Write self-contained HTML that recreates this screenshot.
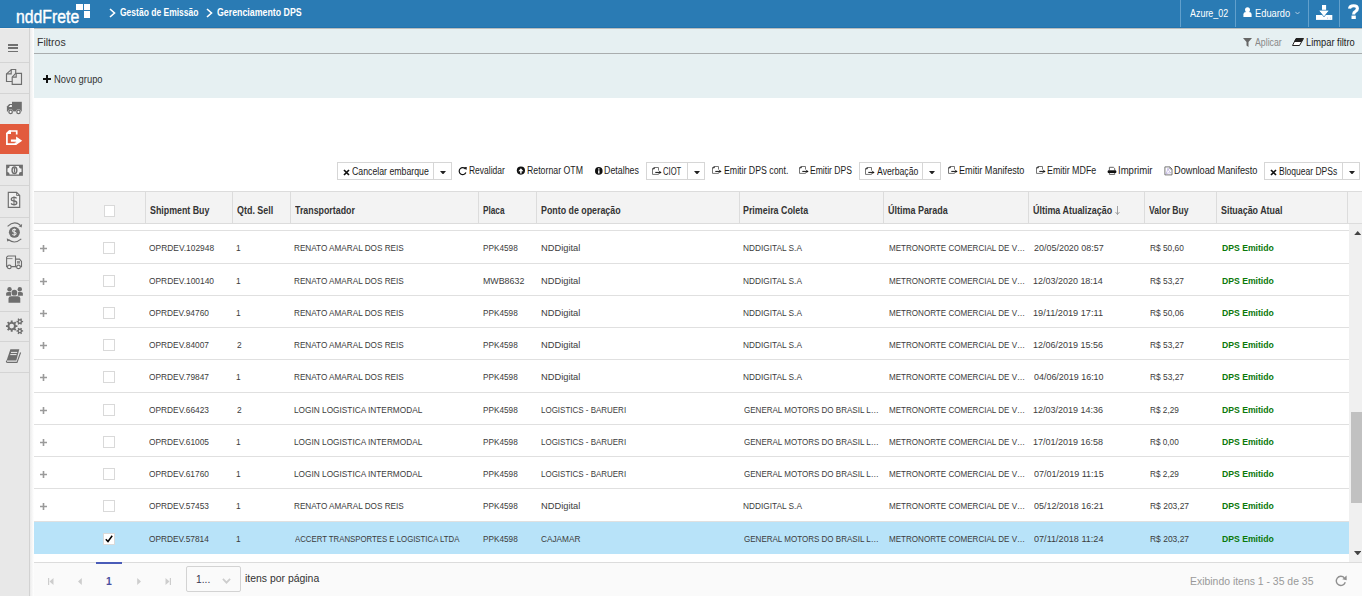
<!DOCTYPE html><html><head><meta charset="utf-8"><style>
*{margin:0;padding:0;box-sizing:border-box}
html,body{width:1362px;height:596px;overflow:hidden;background:#fff;font-family:"Liberation Sans", sans-serif;color:#333}
.a{position:absolute}
.t{position:absolute;white-space:nowrap;line-height:1;transform-origin:0 0}
</style></head><body>
<div class="a" style="left:0;top:0;width:1362px;height:28px;background:#2a7bb4"></div>
<div class="t" style="left:16.24px;top:8.00px;font-size:18px;color:#fff;transform:scaleX(0.8771);-webkit-text-stroke:0.4px #fff;">nddFrete</div>
<div class="a" style="left:76px;top:4px;width:7px;height:6px;background:#fff"></div>
<div class="a" style="left:84px;top:4px;width:6px;height:6px;background:#fff"></div>
<div class="a" style="left:84px;top:11px;width:6px;height:7px;background:#fff"></div>
<svg class="a" style="left:108.5px;top:8px" width="7" height="10" viewBox="0 0 7 10"><path d="M1 1 L5.5 5 L1 9" stroke="#fff" stroke-width="1.6" fill="none"/></svg>
<div class="t" style="left:120.46px;top:8.00px;font-size:10px;font-weight:bold;color:#fff;transform:scaleX(0.8509);">Gestão de Emissão</div>
<svg class="a" style="left:205.5px;top:8px" width="7" height="10" viewBox="0 0 7 10"><path d="M1 1 L5.5 5 L1 9" stroke="#fff" stroke-width="1.6" fill="none"/></svg>
<div class="t" style="left:216.85px;top:8.00px;font-size:10px;font-weight:bold;color:#fff;transform:scaleX(0.8808);">Gerenciamento DPS</div>
<div class="a" style="left:1180px;top:0;width:1px;height:27px;background:#62a0cc"></div>
<div class="a" style="left:1235px;top:0;width:1px;height:27px;background:#62a0cc"></div>
<div class="a" style="left:1308px;top:0;width:1px;height:27px;background:#62a0cc"></div>
<div class="a" style="left:1339px;top:0;width:1px;height:27px;background:#62a0cc"></div>
<div class="t" style="left:1189.70px;top:9.00px;font-size:10px;color:#fff;transform:scaleX(0.8926);">Azure_02</div>
<svg class="a" style="left:1242.5px;top:7px" width="9" height="10" viewBox="0 0 9 10"><circle cx="4.5" cy="2.7" r="2.5" fill="#fff"/><path d="M0.4 10 V7.6 C0.4 5.8 1.6 5 3 5 L6 5 C7.4 5 8.6 5.8 8.6 7.6 V10Z" fill="#fff"/></svg>
<div class="t" style="left:1254.96px;top:9.00px;font-size:10px;color:#fff;transform:scaleX(0.9305);">Eduardo</div>
<svg class="a" style="left:1295px;top:11px" width="5" height="4" viewBox="0 0 5 4"><path d="M0.3 0.8 L2.5 3 L4.7 0.8" stroke="#cfe0ee" stroke-width="0.8" fill="none"/></svg>
<svg class="a" style="left:1310px;top:0px" width="28" height="24" viewBox="0 0 28 24"><rect x="6" y="15" width="16.3" height="4.9" fill="#fff"/><rect x="12" y="5" width="4.1" height="6" fill="#fff"/><path d="M8.7 10.3 H19.2 L14 16.8Z" fill="#fff" stroke="#2a7bb4" stroke-width="0.9"/><path d="M9.6 10.8 H18.3 L14 16Z" fill="#fff"/><rect x="17.1" y="17.6" width="1" height="1" fill="#b9b4e0"/><rect x="19.8" y="17.6" width="1" height="1" fill="#b9d0e8"/></svg>
<svg class="a" style="left:1346px;top:3px" width="16" height="18" viewBox="0 0 16 18"><path d="M3.5 5.6 Q3.8 2.7 7.6 2.7 Q11.4 2.7 11.4 5.6 Q11.4 7.4 9.5 8.4 Q7.6 9.3 7.6 11.4" stroke="#fff" stroke-width="3.1" fill="none"/><rect x="5.5" y="12.6" width="4.3" height="3.4" fill="#fff"/></svg>
<div class="a" style="left:0;top:28px;width:29px;height:568px;background:#e8e8e8"></div>
<div class="a" style="left:29px;top:28px;width:1px;height:568px;background:#d2d2d2"></div>
<div class="a" style="left:0;top:62px;width:29px;height:1px;background:#d4d4d4"></div>
<div class="a" style="left:0;top:93px;width:29px;height:1px;background:#d4d4d4"></div>
<div class="a" style="left:0;top:124px;width:29px;height:30px;background:#e25b3d"></div>
<div class="a" style="left:0;top:185px;width:29px;height:1px;background:#d4d4d4"></div>
<div class="a" style="left:0;top:217px;width:29px;height:1px;background:#d4d4d4"></div>
<div class="a" style="left:0;top:248px;width:29px;height:1px;background:#d4d4d4"></div>
<div class="a" style="left:0;top:280px;width:29px;height:1px;background:#d4d4d4"></div>
<div class="a" style="left:0;top:311px;width:29px;height:1px;background:#d4d4d4"></div>
<div class="a" style="left:0;top:341px;width:29px;height:1px;background:#d4d4d4"></div>
<div class="a" style="left:0;top:372px;width:29px;height:1px;background:#d4d4d4"></div>
<div class="a" style="left:8px;top:44.3px;width:9.6px;height:1.3px;background:#707070"></div>
<div class="a" style="left:8px;top:47.3px;width:9.6px;height:1.3px;background:#707070"></div>
<div class="a" style="left:8px;top:50.6px;width:9.6px;height:1.3px;background:#707070"></div>
<svg class="a" style="left:3px;top:66px" width="22" height="22" viewBox="0 0 22 22"><g stroke="#6e6e6e" stroke-width="1.15" fill="none" stroke-linejoin="miter"><path d="M9.2 15.5 H3.5 V7.9 L8.4 3.5 H12.7 V7.4"/><path d="M3.5 7.9 H8.2 V3.5"/><path d="M9.2 11.1 L12.7 7.4 H18.5 V18.4 H9.2 Z"/><path d="M9.2 11.1 H13.2 V7.4"/></g></svg>
<svg class="a" style="left:3px;top:97px" width="22" height="22" viewBox="0 0 22 22"><rect x="9" y="4.8" width="9.8" height="9.6" fill="#6e6e6e"/><path d="M3.9 14.4 V9.4 L6.3 7 H9.5 V14.4 Z" fill="#6e6e6e"/><path d="M5.6 9.9 L7.4 8.1 H8.9 V9.9 Z" fill="#f4f4f4"/><circle cx="7.6" cy="14.9" r="2.6" fill="#e8e8e8"/><circle cx="15.5" cy="14.9" r="2.6" fill="#e8e8e8"/><circle cx="7.6" cy="14.9" r="1.7" fill="#fafafa" stroke="#6e6e6e" stroke-width="1.3"/><circle cx="15.5" cy="14.9" r="1.7" fill="#fafafa" stroke="#6e6e6e" stroke-width="1.3"/></svg>
<svg class="a" style="left:3px;top:125px" width="22" height="22" viewBox="0 0 22 22"><g stroke="#fff" stroke-width="1.7" fill="none" stroke-linejoin="miter"><path d="M13.7 9.6 V6 H6.3 L3.9 8.4 V19.1 H12.6 V17.6"/></g><path d="M3.1 8.9 L6.3 5.6 H8 V8.9 Z" fill="#fff"/><path d="M7.9 14.6 H13.1 V11.4 L19.2 15.7 L13.1 19.9 V16.7 H7.9Z" fill="#fff"/></svg>
<svg class="a" style="left:3px;top:159px" width="22" height="22" viewBox="0 0 22 22"><rect x="3.1" y="5.7" width="16.8" height="11.1" fill="#6e6e6e"/><path d="M6.6 7.1 H15.9 A2.3 2.3 0 0 0 18.5 9.6 V13 A2.3 2.3 0 0 0 15.9 15.4 H6.6 A2.3 2.3 0 0 0 4.5 13 V9.6 A2.3 2.3 0 0 0 6.6 7.1Z" fill="#f2f2f2"/><ellipse cx="11.45" cy="11.25" rx="2.4" ry="3.2" fill="none" stroke="#6e6e6e" stroke-width="1.4"/><path d="M11.5 9 V13.5" stroke="#6e6e6e" stroke-width="1.3"/></svg>
<svg class="a" style="left:3px;top:189px" width="22" height="22" viewBox="0 0 22 22"><path d="M5.3 3.4 H13.6 L16.7 6.5 V18.4 H5.3 Z" fill="#f0f0f0" stroke="#6e6e6e" stroke-width="1.15"/><path d="M13.6 3.4 V6.5 H16.7" fill="none" stroke="#6e6e6e" stroke-width="0.9"/><path d="M13.6 9.4 Q13 8.4 11 8.4 Q8.3 8.4 8.3 10.3 Q8.3 11.8 11 12 Q13.8 12.2 13.8 13.9 Q13.8 15.6 11 15.6 Q8.7 15.6 8.1 14.4" fill="none" stroke="#6e6e6e" stroke-width="1.3"/><path d="M11 7.4 V16.4" stroke="#6e6e6e" stroke-width="1.1"/></svg>
<svg class="a" style="left:3px;top:221px" width="22" height="22" viewBox="0 0 22 22"><circle cx="11.4" cy="11.3" r="5.5" fill="#6e6e6e"/><path d="M12.9 9.2 Q12.5 8.4 11.3 8.4 Q9.6 8.4 9.6 9.8 Q9.6 10.9 11.3 11.1 Q13.1 11.3 13.1 12.6 Q13.1 14 11.3 14 Q9.9 14 9.5 13.1" fill="none" stroke="#e8e8e8" stroke-width="1.1"/><path d="M11.3 7.6 V14.9" stroke="#e8e8e8" stroke-width="0.9"/><path d="M4.6 5.4 Q11 -0.8 17.2 4.0" fill="none" stroke="#6e6e6e" stroke-width="1.1"/><path d="M19.1 3.0 L18.7 6.4 L15.5 5.3 Z" fill="#6e6e6e"/><path d="M18.3 17.9 Q11.8 23.5 5.6 18.8" fill="none" stroke="#6e6e6e" stroke-width="1.1"/><path d="M3.8 17.2 L4.2 20.6 L7.2 19.2 Z" fill="#6e6e6e"/></svg>
<svg class="a" style="left:3px;top:251px" width="22" height="22" viewBox="0 0 22 22"><g stroke="#6e6e6e" stroke-width="1.1" fill="none"><path d="M3.6 15.6 V6.2 L5 5 H12.5 V15.6 Z"/><path d="M12.5 8.1 H16.5 L18.5 10.4 V15.6 H12.5"/><path d="M4 7.6 H9.5" stroke-width="0.8"/></g><rect x="14" y="10" width="3" height="2.6" fill="#6e6e6e" opacity="0.7"/><circle cx="6.3" cy="15.9" r="1.8" fill="#f4f4f4" stroke="#6e6e6e" stroke-width="1.2"/><circle cx="15.5" cy="15.9" r="1.8" fill="#f4f4f4" stroke="#6e6e6e" stroke-width="1.2"/></svg>
<svg class="a" style="left:3px;top:284px" width="22" height="22" viewBox="0 0 22 22"><circle cx="6.5" cy="5.2" r="2.2" fill="#6e6e6e"/><circle cx="16.8" cy="5.2" r="2.2" fill="#6e6e6e"/><path d="M3.1 11.8 V9.5 Q3.1 7.9 5 7.9 H7.8 L8.2 11.8 Z" fill="#6e6e6e"/><path d="M19.9 11.8 V9.5 Q19.9 7.9 18 7.9 H15.2 L14.8 11.8 Z" fill="#6e6e6e"/><circle cx="11.4" cy="8.7" r="2.9" fill="#6e6e6e"/><path d="M5.5 18.8 V14.6 Q5.5 12.2 8 12.2 H14.8 Q17.3 12.2 17.3 14.6 V18.8 Z" fill="#6e6e6e"/></svg>
<svg class="a" style="left:3px;top:315px" width="22" height="22" viewBox="0 0 22 22"><path d="M14.42 10.15 L14.42 12.05 L12.89 12.07 L12.35 13.38 L13.42 14.47 L12.07 15.82 L10.98 14.75 L9.67 15.29 L9.65 16.82 L7.75 16.82 L7.73 15.29 L6.42 14.75 L5.33 15.82 L3.98 14.47 L5.05 13.38 L4.51 12.07 L2.98 12.05 L2.98 10.15 L4.51 10.13 L5.05 8.82 L3.98 7.73 L5.33 6.38 L6.42 7.45 L7.73 6.91 L7.75 5.38 L9.65 5.38 L9.67 6.91 L10.98 7.45 L12.07 6.38 L13.42 7.73 L12.35 8.82 L12.89 10.13Z M11.00 11.10 A2.3 2.3 0 1 0 6.40 11.10 A2.3 2.3 0 1 0 11.00 11.10Z" fill="#6e6e6e" fill-rule="evenodd"/><path d="M20.12 5.86 L20.12 7.34 L19.09 7.32 L18.57 8.22 L19.10 9.10 L17.82 9.84 L17.32 8.94 L16.28 8.94 L15.78 9.84 L14.50 9.10 L15.03 8.22 L14.51 7.32 L13.48 7.34 L13.48 5.86 L14.51 5.88 L15.03 4.98 L14.50 4.10 L15.78 3.36 L16.28 4.26 L17.32 4.26 L17.82 3.36 L19.10 4.10 L18.57 4.98 L19.09 5.88Z M17.80 6.60 A1.0 1.0 0 1 0 15.80 6.60 A1.0 1.0 0 1 0 17.80 6.60Z" fill="#6e6e6e" fill-rule="evenodd"/><path d="M20.12 15.16 L20.12 16.64 L19.09 16.62 L18.57 17.52 L19.10 18.40 L17.82 19.14 L17.32 18.24 L16.28 18.24 L15.78 19.14 L14.50 18.40 L15.03 17.52 L14.51 16.62 L13.48 16.64 L13.48 15.16 L14.51 15.18 L15.03 14.28 L14.50 13.40 L15.78 12.66 L16.28 13.56 L17.32 13.56 L17.82 12.66 L19.10 13.40 L18.57 14.28 L19.09 15.18Z M17.80 15.90 A1.0 1.0 0 1 0 15.80 15.90 A1.0 1.0 0 1 0 17.80 15.90Z" fill="#6e6e6e" fill-rule="evenodd"/></svg>
<svg class="a" style="left:3px;top:345px" width="22" height="22" viewBox="0 0 22 22"><path d="M7.4 4.3 H16.3 L13.3 15.6 H3.6 Z" fill="#6e6e6e"/><path d="M3.6 15.6 Q3 17.4 4.6 17.4 H14 L17.6 7.5" fill="none" stroke="#6e6e6e" stroke-width="1.1"/><path d="M8 7.4 H14.2 M7.3 9.6 H13.5" stroke="#eeeeee" stroke-width="1"/></svg>
<div class="a" style="left:30px;top:28px;width:4px;height:568px;background:linear-gradient(to right,#ececec,#fff)"></div>
<div class="a" style="left:34px;top:28px;width:1328px;height:70px;background:#e6f0f2"></div>
<div class="a" style="left:34px;top:53px;width:1328px;height:1px;background:#a9adae"></div>
<div class="a" style="left:34px;top:28px;width:1328px;height:1px;background:#b9bcbd"></div>
<div class="a" style="left:0;top:28px;width:29px;height:1px;background:#f2eeea"></div>
<div class="a" style="left:0;top:27px;width:1362px;height:1px;background:#2374ae"></div>
<div class="t" style="left:36.94px;top:37.00px;font-size:11px;color:#333;transform:scaleX(0.9567);">Filtros</div>
<svg class="a" style="left:1242.8px;top:38px" width="9" height="9" viewBox="0 0 9 9"><path d="M0 0 H9 L5.5 4 V9 L3.5 7.5 V4Z" fill="#666"/></svg>
<div class="t" style="left:1255.00px;top:38.00px;font-size:10px;color:#888;transform:scaleX(0.8740);">Aplicar</div>
<svg class="a" style="left:1292px;top:38px" width="12" height="8" viewBox="0 0 12 8"><path d="M4 0.5 H11.5 L7.5 7.5 H0.5Z" fill="#fff" stroke="#222" stroke-width="1"/><path d="M4 0.5 H11.5 L9.5 4 H2Z" fill="#222"/></svg>
<div class="t" style="left:1306.05px;top:38.00px;font-size:10px;color:#222;transform:scaleX(0.9320);">Limpar filtro</div>
<svg class="a" style="left:43px;top:75px" width="8" height="8" viewBox="0 0 8 8"><path d="M3 0 H5 V3 H8 V5 H5 V8 H3 V5 H0 V3 H3Z" fill="#111"/></svg>
<div class="t" style="left:53.55px;top:75.00px;font-size:10px;color:#333;transform:scaleX(0.9399);">Novo grupo</div>
<div class="a" style="left:337px;top:162px;width:115px;height:18px;border:1px solid #d6d6d6;background:#fff"></div><div class="a" style="left:433px;top:163px;width:1px;height:16px;background:#d6d6d6"></div>
<svg class="a" style="left:343px;top:168.5px" width="7" height="7" viewBox="0 0 7 7"><path d="M1 1 L6 6 M6 1 L1 6" stroke="#111" stroke-width="1.7"/></svg>
<div class="t" style="left:351.56px;top:167.00px;font-size:10px;color:#1c1c1c;transform:scaleX(0.8739);">Cancelar embarque</div>
<svg class="a" style="left:440px;top:170.5px" width="6" height="3.5" viewBox="0 0 6 3.5"><path d="M0 0 H6 L3 3.5Z" fill="#222"/></svg>
<svg class="a" style="left:458px;top:166px" width="10" height="10" viewBox="0 0 10 10"><path d="M7.6 3.2 A3.5 3.5 0 1 0 7.9 6.6" stroke="#111" stroke-width="1.2" fill="none"/><path d="M6 1.3 L8.8 1 L8.5 4 Z" fill="#111"/></svg>
<div class="t" style="left:469.12px;top:166.00px;font-size:10px;color:#1c1c1c;transform:scaleX(0.8472);">Revalidar</div>
<svg class="a" style="left:516px;top:166px" width="10" height="10" viewBox="0 0 10 10"><circle cx="4.9" cy="4.6" r="4.1" fill="#111"/><path d="M2.35 5.2 L4.9 2.3 L7.45 5.2 H5.65 V7.5 H4.15 V5.2 Z" fill="#fff"/></svg>
<div class="t" style="left:526.80px;top:166.00px;font-size:10px;color:#1c1c1c;transform:scaleX(0.8754);">Retornar OTM</div>
<svg class="a" style="left:594.5px;top:167px" width="8" height="8" viewBox="0 0 8 8"><circle cx="3.8" cy="3.9" r="3.8" fill="#111"/><rect x="3.1" y="3.3" width="1.4" height="3.2" fill="#fff"/><rect x="3.1" y="1.3" width="1.4" height="1.3" fill="#fff"/></svg>
<div class="t" style="left:604.29px;top:166.00px;font-size:10px;color:#1c1c1c;transform:scaleX(0.8836);">Detalhes</div>
<div class="a" style="left:646px;top:162px;width:59px;height:18px;border:1px solid #d6d6d6;background:#fff"></div><div class="a" style="left:687px;top:163px;width:1px;height:16px;background:#d6d6d6"></div>
<svg class="a" style="left:651.5px;top:166.5px" width="11" height="9" viewBox="0 0 11 9"><path d="M6.5 3.6 V0.5 H2.3 L0.5 1.8 V7.4 H6.5 V6.4" stroke="#666" stroke-width="0.9" fill="none"/><path d="M0.5 1.8 H2.3 V0.5" stroke="#111" stroke-width="0.9" fill="none"/><path d="M3.3 5.4 H7.8" stroke="#111" stroke-width="1"/><path d="M7.3 3.7 L9.6 5.4 L7.3 7.1Z" fill="#111"/></svg>
<div class="t" style="left:663.32px;top:167.00px;font-size:10px;color:#1c1c1c;transform:scaleX(0.7636);">CIOT</div>
<svg class="a" style="left:694px;top:170.5px" width="6" height="3.5" viewBox="0 0 6 3.5"><path d="M0 0 H6 L3 3.5Z" fill="#222"/></svg>
<svg class="a" style="left:712px;top:166px" width="11" height="9" viewBox="0 0 11 9"><path d="M6.5 3.6 V0.5 H2.3 L0.5 1.8 V7.4 H6.5 V6.4" stroke="#666" stroke-width="0.9" fill="none"/><path d="M0.5 1.8 H2.3 V0.5" stroke="#111" stroke-width="0.9" fill="none"/><path d="M3.3 5.4 H7.8" stroke="#111" stroke-width="1"/><path d="M7.3 3.7 L9.6 5.4 L7.3 7.1Z" fill="#111"/></svg>
<div class="t" style="left:723.70px;top:166.00px;font-size:10px;color:#1c1c1c;transform:scaleX(0.8776);">Emitir DPS cont.</div>
<svg class="a" style="left:799px;top:166px" width="11" height="9" viewBox="0 0 11 9"><path d="M6.5 3.6 V0.5 H2.3 L0.5 1.8 V7.4 H6.5 V6.4" stroke="#666" stroke-width="0.9" fill="none"/><path d="M0.5 1.8 H2.3 V0.5" stroke="#111" stroke-width="0.9" fill="none"/><path d="M3.3 5.4 H7.8" stroke="#111" stroke-width="1"/><path d="M7.3 3.7 L9.6 5.4 L7.3 7.1Z" fill="#111"/></svg>
<div class="t" style="left:810.11px;top:166.00px;font-size:10px;color:#1c1c1c;transform:scaleX(0.8571);">Emitir DPS</div>
<div class="a" style="left:859px;top:162px;width:82px;height:18px;border:1px solid #d6d6d6;background:#fff"></div><div class="a" style="left:922px;top:163px;width:1px;height:16px;background:#d6d6d6"></div>
<svg class="a" style="left:864.5px;top:166.5px" width="11" height="9" viewBox="0 0 11 9"><path d="M6.5 3.6 V0.5 H2.3 L0.5 1.8 V7.4 H6.5 V6.4" stroke="#666" stroke-width="0.9" fill="none"/><path d="M0.5 1.8 H2.3 V0.5" stroke="#111" stroke-width="0.9" fill="none"/><path d="M3.3 5.4 H7.8" stroke="#111" stroke-width="1"/><path d="M7.3 3.7 L9.6 5.4 L7.3 7.1Z" fill="#111"/></svg>
<div class="t" style="left:876.50px;top:167.00px;font-size:10px;color:#1c1c1c;transform:scaleX(0.8674);">Averbação</div>
<svg class="a" style="left:929px;top:170.5px" width="6" height="3.5" viewBox="0 0 6 3.5"><path d="M0 0 H6 L3 3.5Z" fill="#222"/></svg>
<svg class="a" style="left:948px;top:166px" width="11" height="9" viewBox="0 0 11 9"><path d="M6.5 3.6 V0.5 H2.3 L0.5 1.8 V7.4 H6.5 V6.4" stroke="#666" stroke-width="0.9" fill="none"/><path d="M0.5 1.8 H2.3 V0.5" stroke="#111" stroke-width="0.9" fill="none"/><path d="M3.3 5.4 H7.8" stroke="#111" stroke-width="1"/><path d="M7.3 3.7 L9.6 5.4 L7.3 7.1Z" fill="#111"/></svg>
<div class="t" style="left:958.97px;top:166.00px;font-size:10px;color:#1c1c1c;transform:scaleX(0.9118);">Emitir Manifesto</div>
<svg class="a" style="left:1036px;top:166px" width="11" height="9" viewBox="0 0 11 9"><path d="M6.5 3.6 V0.5 H2.3 L0.5 1.8 V7.4 H6.5 V6.4" stroke="#666" stroke-width="0.9" fill="none"/><path d="M0.5 1.8 H2.3 V0.5" stroke="#111" stroke-width="0.9" fill="none"/><path d="M3.3 5.4 H7.8" stroke="#111" stroke-width="1"/><path d="M7.3 3.7 L9.6 5.4 L7.3 7.1Z" fill="#111"/></svg>
<div class="t" style="left:1047.09px;top:166.00px;font-size:10px;color:#1c1c1c;transform:scaleX(0.8862);">Emitir MDFe</div>
<svg class="a" style="left:1107px;top:166px" width="10" height="10" viewBox="0 0 10 10"><path d="M2.4 4.5 V1.3 H6.4 L7.7 2.5 V4.5" stroke="#555" stroke-width="0.9" fill="none"/><rect x="1" y="4.6" width="8" height="2" fill="#111"/><rect x="0.6" y="4.4" width="8.8" height="2.6" rx="1" fill="#111"/><path d="M2.4 7 V8.4 H7.7 V7" stroke="#555" stroke-width="0.9" fill="none"/></svg>
<div class="t" style="left:1117.94px;top:166.00px;font-size:10px;color:#1c1c1c;transform:scaleX(0.9551);">Imprimir</div>
<svg class="a" style="left:1163.5px;top:165.5px" width="9" height="10" viewBox="0 0 9 10"><path d="M0.9 0.9 H5.9 L8 3 V8.9 H0.9Z" stroke="#666" stroke-width="0.9" fill="none"/><path d="M5.9 0.9 V3 H8" stroke="#666" stroke-width="0.7" fill="none"/><path d="M1.8 8 Q3.5 5 4 2.2 Q4.6 5.5 6.8 6.8 Q4 6.5 1.8 8Z" stroke="#a99bd6" stroke-width="0.6" fill="none"/></svg>
<div class="t" style="left:1173.86px;top:166.00px;font-size:10px;color:#1c1c1c;transform:scaleX(0.9201);">Download Manifesto</div>
<div class="a" style="left:1264px;top:162px;width:96px;height:18px;border:1px solid #d6d6d6;background:#fff"></div><div class="a" style="left:1342px;top:163px;width:1px;height:16px;background:#d6d6d6"></div>
<svg class="a" style="left:1270px;top:168.5px" width="7" height="7" viewBox="0 0 7 7"><path d="M1 1 L6 6 M6 1 L1 6" stroke="#111" stroke-width="1.7"/></svg>
<div class="t" style="left:1278.92px;top:167.00px;font-size:10px;color:#1c1c1c;transform:scaleX(0.8503);">Bloquear DPSs</div>
<svg class="a" style="left:1349px;top:170.5px" width="6" height="3.5" viewBox="0 0 6 3.5"><path d="M0 0 H6 L3 3.5Z" fill="#222"/></svg>
<div class="a" style="left:34px;top:191px;width:1328px;height:33px;background:#f3f3f3;border-top:1px solid #dcdcdc;border-bottom:1px solid #dcdcdc"></div>
<div class="a" style="left:73px;top:192px;width:1px;height:31px;background:#dcdcdc"></div>
<div class="a" style="left:145px;top:192px;width:1px;height:31px;background:#dcdcdc"></div>
<div class="a" style="left:232px;top:192px;width:1px;height:31px;background:#dcdcdc"></div>
<div class="a" style="left:290px;top:192px;width:1px;height:31px;background:#dcdcdc"></div>
<div class="a" style="left:478px;top:192px;width:1px;height:31px;background:#dcdcdc"></div>
<div class="a" style="left:536px;top:192px;width:1px;height:31px;background:#dcdcdc"></div>
<div class="a" style="left:739px;top:192px;width:1px;height:31px;background:#dcdcdc"></div>
<div class="a" style="left:883px;top:192px;width:1px;height:31px;background:#dcdcdc"></div>
<div class="a" style="left:1028px;top:192px;width:1px;height:31px;background:#dcdcdc"></div>
<div class="a" style="left:1144px;top:192px;width:1px;height:31px;background:#dcdcdc"></div>
<div class="a" style="left:1216px;top:192px;width:1px;height:31px;background:#dcdcdc"></div>
<div class="a" style="left:1347px;top:192px;width:1px;height:31px;background:#dcdcdc"></div>
<div class="a" style="left:104px;top:205px;width:11px;height:12px;border:1px solid #d9d9d9;background:#fff"></div>
<div class="t" style="left:149.82px;top:206.00px;font-size:10px;font-weight:bold;color:#333;transform:scaleX(0.8842);">Shipment Buy</div>
<div class="t" style="left:236.54px;top:206.00px;font-size:10px;font-weight:bold;color:#333;transform:scaleX(0.8941);">Qtd. Sell</div>
<div class="t" style="left:295.21px;top:206.00px;font-size:10px;font-weight:bold;color:#333;transform:scaleX(0.8832);">Transportador</div>
<div class="t" style="left:482.81px;top:206.00px;font-size:10px;font-weight:bold;color:#333;transform:scaleX(0.8219);">Placa</div>
<div class="t" style="left:540.67px;top:206.00px;font-size:10px;font-weight:bold;color:#333;transform:scaleX(0.8843);">Ponto de operação</div>
<div class="t" style="left:743.07px;top:206.00px;font-size:10px;font-weight:bold;color:#333;transform:scaleX(0.8875);">Primeira Coleta</div>
<div class="t" style="left:887.96px;top:206.00px;font-size:10px;font-weight:bold;color:#333;transform:scaleX(0.8968);">Última Parada</div>
<div class="t" style="left:1032.76px;top:206.00px;font-size:10px;font-weight:bold;color:#333;transform:scaleX(0.8943);">Última Atualização</div>
<div class="t" style="left:1148.80px;top:206.00px;font-size:10px;font-weight:bold;color:#333;transform:scaleX(0.8578);">Valor Buy</div>
<div class="t" style="left:1220.92px;top:206.00px;font-size:10px;font-weight:bold;color:#333;transform:scaleX(0.8880);">Situação Atual</div>
<svg class="a" style="left:1115px;top:206px" width="5" height="9" viewBox="0 0 5 9"><path d="M2.5 0 V8.5 M0.5 6 L2.5 8.5 L4.5 6" stroke="#999" stroke-width="0.9" fill="none"/></svg>
<div class="a" style="left:34px;top:230px;width:1315px;height:1px;background:#e0e0e0"></div>
<div class="a" style="left:34px;top:263px;width:1315px;height:1px;background:#e0e0e0"></div>
<svg class="a" style="left:40px;top:245.00px" width="7" height="7" viewBox="0 0 7 7"><path d="M3.5 0 V7 M0 3.5 H7" stroke="#9a9a9a" stroke-width="1.6"/></svg>
<div class="a" style="left:103px;top:242px;width:12px;height:12px;border:1px solid #d9d9d9;background:#fff"></div>
<div class="t" style="left:149.05px;top:243.00px;font-size:9.5px;color:#3c3c3c;transform:scaleX(0.8846);">OPRDEV.102948</div>
<div class="t" style="left:236.28px;top:243.00px;font-size:9.5px;color:#3c3c3c;transform:scaleX(0.8811);">1</div>
<div class="t" style="left:294.10px;top:243.00px;font-size:9.5px;color:#3c3c3c;transform:scaleX(0.8601);">RENATO AMARAL DOS REIS</div>
<div class="t" style="left:482.69px;top:243.00px;font-size:9.5px;color:#3c3c3c;transform:scaleX(0.8653);">PPK4598</div>
<div class="t" style="left:540.51px;top:243.00px;font-size:9.5px;color:#3c3c3c;transform:scaleX(0.9791);">NDDigital</div>
<div class="t" style="left:743.39px;top:243.00px;font-size:9.5px;color:#3c3c3c;transform:scaleX(0.8724);">NDDIGITAL S.A</div>
<div class="t" style="left:888.71px;top:243.00px;font-size:9.5px;color:#3c3c3c;transform:scaleX(0.8483);">METRONORTE COMERCIAL DE V…</div>
<div class="t" style="left:1033.62px;top:243.00px;font-size:9.5px;color:#3c3c3c;transform:scaleX(0.9429);">20/05/2020 08:57</div>
<div class="t" style="left:1149.69px;top:243.00px;font-size:9.5px;color:#3c3c3c;transform:scaleX(0.8783);">R$ 50,60</div>
<div class="t" style="left:1222.25px;top:243.00px;font-size:9.5px;font-weight:bold;color:#0a780a;transform:scaleX(0.9091);">DPS Emitido</div>
<div class="a" style="left:34px;top:295px;width:1315px;height:1px;background:#e0e0e0"></div>
<svg class="a" style="left:40px;top:278.00px" width="7" height="7" viewBox="0 0 7 7"><path d="M3.5 0 V7 M0 3.5 H7" stroke="#9a9a9a" stroke-width="1.6"/></svg>
<div class="a" style="left:103px;top:275px;width:12px;height:12px;border:1px solid #d9d9d9;background:#fff"></div>
<div class="t" style="left:149.05px;top:276.00px;font-size:9.5px;color:#3c3c3c;transform:scaleX(0.8833);">OPRDEV.100140</div>
<div class="t" style="left:236.28px;top:276.00px;font-size:9.5px;color:#3c3c3c;transform:scaleX(0.8811);">1</div>
<div class="t" style="left:294.10px;top:276.00px;font-size:9.5px;color:#3c3c3c;transform:scaleX(0.8601);">RENATO AMARAL DOS REIS</div>
<div class="t" style="left:482.65px;top:276.00px;font-size:9.5px;color:#3c3c3c;transform:scaleX(0.9314);">MWB8632</div>
<div class="t" style="left:540.51px;top:276.00px;font-size:9.5px;color:#3c3c3c;transform:scaleX(0.9791);">NDDigital</div>
<div class="t" style="left:743.39px;top:276.00px;font-size:9.5px;color:#3c3c3c;transform:scaleX(0.8724);">NDDIGITAL S.A</div>
<div class="t" style="left:888.71px;top:276.00px;font-size:9.5px;color:#3c3c3c;transform:scaleX(0.8483);">METRONORTE COMERCIAL DE V…</div>
<div class="t" style="left:1033.34px;top:276.00px;font-size:9.5px;color:#3c3c3c;transform:scaleX(0.9442);">12/03/2020 18:14</div>
<div class="t" style="left:1149.68px;top:276.00px;font-size:9.5px;color:#3c3c3c;transform:scaleX(0.8806);">R$ 53,27</div>
<div class="t" style="left:1222.25px;top:276.00px;font-size:9.5px;font-weight:bold;color:#0a780a;transform:scaleX(0.9091);">DPS Emitido</div>
<div class="a" style="left:34px;top:327px;width:1315px;height:1px;background:#e0e0e0"></div>
<svg class="a" style="left:40px;top:310.00px" width="7" height="7" viewBox="0 0 7 7"><path d="M3.5 0 V7 M0 3.5 H7" stroke="#9a9a9a" stroke-width="1.6"/></svg>
<div class="a" style="left:103px;top:307px;width:12px;height:12px;border:1px solid #d9d9d9;background:#fff"></div>
<div class="t" style="left:149.05px;top:308.00px;font-size:9.5px;color:#3c3c3c;transform:scaleX(0.8769);">OPRDEV.94760</div>
<div class="t" style="left:236.28px;top:308.00px;font-size:9.5px;color:#3c3c3c;transform:scaleX(0.8811);">1</div>
<div class="t" style="left:294.10px;top:308.00px;font-size:9.5px;color:#3c3c3c;transform:scaleX(0.8601);">RENATO AMARAL DOS REIS</div>
<div class="t" style="left:482.69px;top:308.00px;font-size:9.5px;color:#3c3c3c;transform:scaleX(0.8653);">PPK4598</div>
<div class="t" style="left:540.51px;top:308.00px;font-size:9.5px;color:#3c3c3c;transform:scaleX(0.9791);">NDDigital</div>
<div class="t" style="left:743.39px;top:308.00px;font-size:9.5px;color:#3c3c3c;transform:scaleX(0.8724);">NDDIGITAL S.A</div>
<div class="t" style="left:888.71px;top:308.00px;font-size:9.5px;color:#3c3c3c;transform:scaleX(0.8483);">METRONORTE COMERCIAL DE V…</div>
<div class="t" style="left:1033.32px;top:308.00px;font-size:9.5px;color:#3c3c3c;transform:scaleX(0.9655);">19/11/2019 17:11</div>
<div class="t" style="left:1149.68px;top:308.00px;font-size:9.5px;color:#3c3c3c;transform:scaleX(0.8806);">R$ 50,06</div>
<div class="t" style="left:1222.25px;top:308.00px;font-size:9.5px;font-weight:bold;color:#0a780a;transform:scaleX(0.9091);">DPS Emitido</div>
<div class="a" style="left:34px;top:359px;width:1315px;height:1px;background:#e0e0e0"></div>
<svg class="a" style="left:40px;top:342.00px" width="7" height="7" viewBox="0 0 7 7"><path d="M3.5 0 V7 M0 3.5 H7" stroke="#9a9a9a" stroke-width="1.6"/></svg>
<div class="a" style="left:103px;top:339px;width:12px;height:12px;border:1px solid #d9d9d9;background:#fff"></div>
<div class="t" style="left:149.05px;top:340.00px;font-size:9.5px;color:#3c3c3c;transform:scaleX(0.8782);">OPRDEV.84007</div>
<div class="t" style="left:236.55px;top:340.00px;font-size:9.5px;color:#3c3c3c;transform:scaleX(0.8811);">2</div>
<div class="t" style="left:294.10px;top:340.00px;font-size:9.5px;color:#3c3c3c;transform:scaleX(0.8601);">RENATO AMARAL DOS REIS</div>
<div class="t" style="left:482.69px;top:340.00px;font-size:9.5px;color:#3c3c3c;transform:scaleX(0.8653);">PPK4598</div>
<div class="t" style="left:540.51px;top:340.00px;font-size:9.5px;color:#3c3c3c;transform:scaleX(0.9791);">NDDigital</div>
<div class="t" style="left:743.39px;top:340.00px;font-size:9.5px;color:#3c3c3c;transform:scaleX(0.8724);">NDDIGITAL S.A</div>
<div class="t" style="left:888.71px;top:340.00px;font-size:9.5px;color:#3c3c3c;transform:scaleX(0.8483);">METRONORTE COMERCIAL DE V…</div>
<div class="t" style="left:1033.34px;top:340.00px;font-size:9.5px;color:#3c3c3c;transform:scaleX(0.9468);">12/06/2019 15:56</div>
<div class="t" style="left:1149.68px;top:340.00px;font-size:9.5px;color:#3c3c3c;transform:scaleX(0.8806);">R$ 53,27</div>
<div class="t" style="left:1222.25px;top:340.00px;font-size:9.5px;font-weight:bold;color:#0a780a;transform:scaleX(0.9091);">DPS Emitido</div>
<div class="a" style="left:34px;top:392px;width:1315px;height:1px;background:#e0e0e0"></div>
<svg class="a" style="left:40px;top:374.00px" width="7" height="7" viewBox="0 0 7 7"><path d="M3.5 0 V7 M0 3.5 H7" stroke="#9a9a9a" stroke-width="1.6"/></svg>
<div class="a" style="left:103px;top:371px;width:12px;height:12px;border:1px solid #d9d9d9;background:#fff"></div>
<div class="t" style="left:149.05px;top:372.00px;font-size:9.5px;color:#3c3c3c;transform:scaleX(0.8782);">OPRDEV.79847</div>
<div class="t" style="left:236.28px;top:372.00px;font-size:9.5px;color:#3c3c3c;transform:scaleX(0.8811);">1</div>
<div class="t" style="left:294.10px;top:372.00px;font-size:9.5px;color:#3c3c3c;transform:scaleX(0.8601);">RENATO AMARAL DOS REIS</div>
<div class="t" style="left:482.69px;top:372.00px;font-size:9.5px;color:#3c3c3c;transform:scaleX(0.8653);">PPK4598</div>
<div class="t" style="left:540.51px;top:372.00px;font-size:9.5px;color:#3c3c3c;transform:scaleX(0.9791);">NDDigital</div>
<div class="t" style="left:743.39px;top:372.00px;font-size:9.5px;color:#3c3c3c;transform:scaleX(0.8724);">NDDIGITAL S.A</div>
<div class="t" style="left:888.71px;top:372.00px;font-size:9.5px;color:#3c3c3c;transform:scaleX(0.8483);">METRONORTE COMERCIAL DE V…</div>
<div class="t" style="left:1033.72px;top:372.00px;font-size:9.5px;color:#3c3c3c;transform:scaleX(0.9404);">04/06/2019 16:10</div>
<div class="t" style="left:1149.68px;top:372.00px;font-size:9.5px;color:#3c3c3c;transform:scaleX(0.8806);">R$ 53,27</div>
<div class="t" style="left:1222.25px;top:372.00px;font-size:9.5px;font-weight:bold;color:#0a780a;transform:scaleX(0.9091);">DPS Emitido</div>
<div class="a" style="left:34px;top:424px;width:1315px;height:1px;background:#e0e0e0"></div>
<svg class="a" style="left:40px;top:407.00px" width="7" height="7" viewBox="0 0 7 7"><path d="M3.5 0 V7 M0 3.5 H7" stroke="#9a9a9a" stroke-width="1.6"/></svg>
<div class="a" style="left:103px;top:404px;width:12px;height:12px;border:1px solid #d9d9d9;background:#fff"></div>
<div class="t" style="left:149.05px;top:405.00px;font-size:9.5px;color:#3c3c3c;transform:scaleX(0.8782);">OPRDEV.66423</div>
<div class="t" style="left:236.55px;top:405.00px;font-size:9.5px;color:#3c3c3c;transform:scaleX(0.8811);">2</div>
<div class="t" style="left:294.09px;top:405.00px;font-size:9.5px;color:#3c3c3c;transform:scaleX(0.8711);">LOGIN LOGISTICA INTERMODAL</div>
<div class="t" style="left:482.69px;top:405.00px;font-size:9.5px;color:#3c3c3c;transform:scaleX(0.8653);">PPK4598</div>
<div class="t" style="left:540.61px;top:405.00px;font-size:9.5px;color:#3c3c3c;transform:scaleX(0.8396);">LOGISTICS - BARUERI</div>
<div class="t" style="left:743.66px;top:405.00px;font-size:9.5px;color:#3c3c3c;transform:scaleX(0.8443);">GENERAL MOTORS DO BRASIL L…</div>
<div class="t" style="left:888.71px;top:405.00px;font-size:9.5px;color:#3c3c3c;transform:scaleX(0.8483);">METRONORTE COMERCIAL DE V…</div>
<div class="t" style="left:1033.34px;top:405.00px;font-size:9.5px;color:#3c3c3c;transform:scaleX(0.9468);">12/03/2019 14:36</div>
<div class="t" style="left:1149.69px;top:405.00px;font-size:9.5px;color:#3c3c3c;transform:scaleX(0.8667);">R$ 2,29</div>
<div class="t" style="left:1222.25px;top:405.00px;font-size:9.5px;font-weight:bold;color:#0a780a;transform:scaleX(0.9091);">DPS Emitido</div>
<div class="a" style="left:34px;top:456px;width:1315px;height:1px;background:#e0e0e0"></div>
<svg class="a" style="left:40px;top:439.00px" width="7" height="7" viewBox="0 0 7 7"><path d="M3.5 0 V7 M0 3.5 H7" stroke="#9a9a9a" stroke-width="1.6"/></svg>
<div class="a" style="left:103px;top:436px;width:12px;height:12px;border:1px solid #d9d9d9;background:#fff"></div>
<div class="t" style="left:149.05px;top:437.00px;font-size:9.5px;color:#3c3c3c;transform:scaleX(0.8782);">OPRDEV.61005</div>
<div class="t" style="left:236.28px;top:437.00px;font-size:9.5px;color:#3c3c3c;transform:scaleX(0.8811);">1</div>
<div class="t" style="left:294.09px;top:437.00px;font-size:9.5px;color:#3c3c3c;transform:scaleX(0.8711);">LOGIN LOGISTICA INTERMODAL</div>
<div class="t" style="left:482.69px;top:437.00px;font-size:9.5px;color:#3c3c3c;transform:scaleX(0.8653);">PPK4598</div>
<div class="t" style="left:540.61px;top:437.00px;font-size:9.5px;color:#3c3c3c;transform:scaleX(0.8396);">LOGISTICS - BARUERI</div>
<div class="t" style="left:743.66px;top:437.00px;font-size:9.5px;color:#3c3c3c;transform:scaleX(0.8443);">GENERAL MOTORS DO BRASIL L…</div>
<div class="t" style="left:888.71px;top:437.00px;font-size:9.5px;color:#3c3c3c;transform:scaleX(0.8483);">METRONORTE COMERCIAL DE V…</div>
<div class="t" style="left:1033.34px;top:437.00px;font-size:9.5px;color:#3c3c3c;transform:scaleX(0.9468);">17/01/2019 16:58</div>
<div class="t" style="left:1149.70px;top:437.00px;font-size:9.5px;color:#3c3c3c;transform:scaleX(0.8641);">R$ 0,00</div>
<div class="t" style="left:1222.25px;top:437.00px;font-size:9.5px;font-weight:bold;color:#0a780a;transform:scaleX(0.9091);">DPS Emitido</div>
<div class="a" style="left:34px;top:488px;width:1315px;height:1px;background:#e0e0e0"></div>
<svg class="a" style="left:40px;top:471.00px" width="7" height="7" viewBox="0 0 7 7"><path d="M3.5 0 V7 M0 3.5 H7" stroke="#9a9a9a" stroke-width="1.6"/></svg>
<div class="a" style="left:103px;top:468px;width:12px;height:12px;border:1px solid #d9d9d9;background:#fff"></div>
<div class="t" style="left:149.05px;top:469.00px;font-size:9.5px;color:#3c3c3c;transform:scaleX(0.8769);">OPRDEV.61760</div>
<div class="t" style="left:236.28px;top:469.00px;font-size:9.5px;color:#3c3c3c;transform:scaleX(0.8811);">1</div>
<div class="t" style="left:294.09px;top:469.00px;font-size:9.5px;color:#3c3c3c;transform:scaleX(0.8711);">LOGIN LOGISTICA INTERMODAL</div>
<div class="t" style="left:482.69px;top:469.00px;font-size:9.5px;color:#3c3c3c;transform:scaleX(0.8653);">PPK4598</div>
<div class="t" style="left:540.61px;top:469.00px;font-size:9.5px;color:#3c3c3c;transform:scaleX(0.8396);">LOGISTICS - BARUERI</div>
<div class="t" style="left:743.66px;top:469.00px;font-size:9.5px;color:#3c3c3c;transform:scaleX(0.8443);">GENERAL MOTORS DO BRASIL L…</div>
<div class="t" style="left:888.71px;top:469.00px;font-size:9.5px;color:#3c3c3c;transform:scaleX(0.8483);">METRONORTE COMERCIAL DE V…</div>
<div class="t" style="left:1033.71px;top:469.00px;font-size:9.5px;color:#3c3c3c;transform:scaleX(0.9508);">07/01/2019 11:15</div>
<div class="t" style="left:1149.69px;top:469.00px;font-size:9.5px;color:#3c3c3c;transform:scaleX(0.8667);">R$ 2,29</div>
<div class="t" style="left:1222.25px;top:469.00px;font-size:9.5px;font-weight:bold;color:#0a780a;transform:scaleX(0.9091);">DPS Emitido</div>
<div class="a" style="left:34px;top:521px;width:1315px;height:1px;background:#e0e0e0"></div>
<svg class="a" style="left:40px;top:503.00px" width="7" height="7" viewBox="0 0 7 7"><path d="M3.5 0 V7 M0 3.5 H7" stroke="#9a9a9a" stroke-width="1.6"/></svg>
<div class="a" style="left:103px;top:500px;width:12px;height:12px;border:1px solid #d9d9d9;background:#fff"></div>
<div class="t" style="left:149.05px;top:501.00px;font-size:9.5px;color:#3c3c3c;transform:scaleX(0.8782);">OPRDEV.57453</div>
<div class="t" style="left:236.28px;top:501.00px;font-size:9.5px;color:#3c3c3c;transform:scaleX(0.8811);">1</div>
<div class="t" style="left:294.10px;top:501.00px;font-size:9.5px;color:#3c3c3c;transform:scaleX(0.8601);">RENATO AMARAL DOS REIS</div>
<div class="t" style="left:482.69px;top:501.00px;font-size:9.5px;color:#3c3c3c;transform:scaleX(0.8653);">PPK4598</div>
<div class="t" style="left:540.51px;top:501.00px;font-size:9.5px;color:#3c3c3c;transform:scaleX(0.9791);">NDDigital</div>
<div class="t" style="left:743.39px;top:501.00px;font-size:9.5px;color:#3c3c3c;transform:scaleX(0.8724);">NDDIGITAL S.A</div>
<div class="t" style="left:888.71px;top:501.00px;font-size:9.5px;color:#3c3c3c;transform:scaleX(0.8483);">METRONORTE COMERCIAL DE V…</div>
<div class="t" style="left:1033.72px;top:501.00px;font-size:9.5px;color:#3c3c3c;transform:scaleX(0.9417);">05/12/2018 16:21</div>
<div class="t" style="left:1149.68px;top:501.00px;font-size:9.5px;color:#3c3c3c;transform:scaleX(0.8911);">R$ 203,27</div>
<div class="t" style="left:1222.25px;top:501.00px;font-size:9.5px;font-weight:bold;color:#0a780a;transform:scaleX(0.9091);">DPS Emitido</div>
<div class="a" style="left:34px;top:522px;width:1315px;height:32px;background:#b8e3f9"></div>
<div class="a" style="left:103px;top:533px;width:12px;height:12px;border:1px solid #d9d9d9;background:#fff"></div>
<svg class="a" style="left:105px;top:535px" width="8" height="8" viewBox="0 0 8 8"><path d="M0.8 4.2 L3 6.5 L7.2 0.8" stroke="#000" stroke-width="1.5" fill="none"/></svg>
<div class="t" style="left:149.05px;top:534.00px;font-size:9.5px;color:#3c3c3c;transform:scaleX(0.8757);">OPRDEV.57814</div>
<div class="t" style="left:236.28px;top:534.00px;font-size:9.5px;color:#3c3c3c;transform:scaleX(0.8811);">1</div>
<div class="t" style="left:294.70px;top:534.00px;font-size:9.5px;color:#3c3c3c;transform:scaleX(0.8211);">ACCERT TRANSPORTES E LOGISTICA LTDA</div>
<div class="t" style="left:482.69px;top:534.00px;font-size:9.5px;color:#3c3c3c;transform:scaleX(0.8653);">PPK4598</div>
<div class="t" style="left:540.85px;top:534.00px;font-size:9.5px;color:#3c3c3c;transform:scaleX(0.8693);">CAJAMAR</div>
<div class="t" style="left:743.66px;top:534.00px;font-size:9.5px;color:#3c3c3c;transform:scaleX(0.8443);">GENERAL MOTORS DO BRASIL L…</div>
<div class="t" style="left:888.71px;top:534.00px;font-size:9.5px;color:#3c3c3c;transform:scaleX(0.8483);">METRONORTE COMERCIAL DE V…</div>
<div class="t" style="left:1033.71px;top:534.00px;font-size:9.5px;color:#3c3c3c;transform:scaleX(0.9575);">07/11/2018 11:24</div>
<div class="t" style="left:1149.68px;top:534.00px;font-size:9.5px;color:#3c3c3c;transform:scaleX(0.8911);">R$ 203,27</div>
<div class="t" style="left:1222.25px;top:534.00px;font-size:9.5px;font-weight:bold;color:#0a780a;transform:scaleX(0.9091);">DPS Emitido</div>
<div class="a" style="left:1349px;top:224px;width:13px;height:338px;background:#f0f0f0"></div>
<svg class="a" style="left:1353.8px;top:230.6px" width="7.4" height="4.3" viewBox="0 0 7.4 4.3"><path d="M0 4.3 H7.4 L3.7 0Z" fill="#444"/></svg>
<svg class="a" style="left:1353.8px;top:550.9px" width="7.4" height="4.4" viewBox="0 0 7.4 4.4"><path d="M0 0 H7.4 L3.7 4.4Z" fill="#444"/></svg>
<div class="a" style="left:1351px;top:412px;width:11px;height:91px;background:#c1c1c1"></div>
<div class="a" style="left:34px;top:562px;width:1328px;height:34px;background:#fafafa;border-top:1px solid #dcdcdc"></div>
<div class="a" style="left:96px;top:562px;width:26px;height:1.6px;background:#4a5cb8"></div>
<svg class="a" style="left:47.5px;top:578px" width="6" height="7" viewBox="0 0 6 7"><rect x="0" y="0" width="1.2" height="7" fill="#cdcdcd"/><path d="M5.5 0 V7 L1.5 3.5Z" fill="#cdcdcd"/></svg>
<svg class="a" style="left:78px;top:578px" width="4" height="7" viewBox="0 0 4 7"><path d="M3.8 0 V7 L0 3.5Z" fill="#cdcdcd"/></svg>
<div class="t" style="left:106.43px;top:576.00px;font-size:11px;font-weight:bold;color:#4a4fa0;transform:scaleX(0.9434);">1</div>
<svg class="a" style="left:136.5px;top:578px" width="4" height="7" viewBox="0 0 4 7"><path d="M0.2 0 V7 L4 3.5Z" fill="#cdcdcd"/></svg>
<svg class="a" style="left:164.5px;top:578px" width="6" height="7" viewBox="0 0 6 7"><rect x="4.8" y="0" width="1.2" height="7" fill="#cdcdcd"/><path d="M0.5 0 V7 L4.5 3.5Z" fill="#cdcdcd"/></svg>
<div class="a" style="left:186px;top:566px;width:55px;height:26px;border:1px solid #d3d3d3;border-radius:2px;background:#fafafa"></div>
<div class="t" style="left:196.05px;top:574.00px;font-size:11px;color:#3a3550;transform:scaleX(0.9313);">1...</div>
<svg class="a" style="left:221.5px;top:577.8px" width="9" height="6" viewBox="0 0 9 6"><path d="M0.9 0.9 L4.5 4.6 L8.1 0.9" stroke="#cdcdcd" stroke-width="1.8" fill="none"/></svg>
<div class="t" style="left:244.74px;top:573.00px;font-size:11px;color:#333;transform:scaleX(0.9477);">itens por página</div>
<div class="t" style="left:1189.55px;top:576.00px;font-size:11px;color:#999;transform:scaleX(0.9478);">Exibindo itens 1 - 35 de 35</div>
<svg class="a" style="left:1334px;top:574px" width="14" height="14" viewBox="0 0 14 14"><path d="M11.27 8.32 A4.6 4.6 0 1 1 10.3 3.8" stroke="#8f8f8f" stroke-width="1.4" fill="none"/><path d="M12.6 1.5 L12.7 6.2 L8.3 5.3 Z" fill="#8f8f8f"/></svg>
</body></html>
